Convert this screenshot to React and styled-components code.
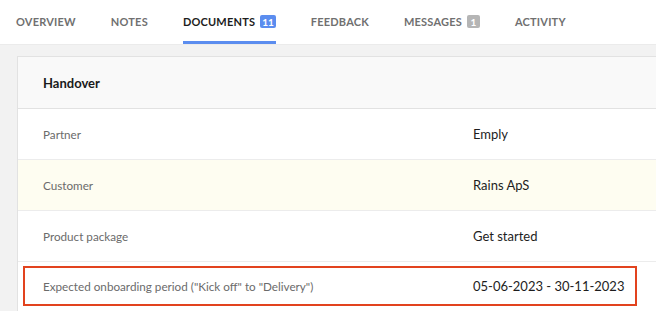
import React from 'react';
import styled, { createGlobalStyle } from 'styled-components';

const GlobalStyle = createGlobalStyle`
  body {
    margin: 0;
    background: #f2f2f2;
    font-family: Lato, "Open Sans", sans-serif;
    overflow: hidden;
  }
`;

const TabBar = styled.nav`
  display: flex;
  gap: 35px;
  height: 45px;
  padding-left: 16px;
  background: #fff;
  border-bottom: 1px solid #ebebeb;
  box-sizing: border-box;
`;

const Tab = styled.div`
  display: flex;
  align-items: center;
  gap: 5px;
  height: 100%;
  box-sizing: border-box;
  padding-top: 2px;
  font-size: 11px;
  font-weight: 700;
  letter-spacing: 0.2px;
  color: ${(p) => (p.active ? '#1d1d1d' : '#707070')};
  border-bottom: 3px solid ${(p) => (p.active ? '#5b8def' : 'transparent')};
  margin-bottom: -1px;
`;

const Badge = styled.span`
  display: inline-flex;
  align-items: center;
  justify-content: center;
  min-width: 13px;
  height: 13px;
  padding: 0 2px;
  box-sizing: border-box;
  border-radius: 2px;
  font-size: 10px;
  font-weight: 700;
  letter-spacing: 0;
  color: #fff;
  background: ${(p) => (p.muted ? '#b5b5b5' : '#5b8def')};
`;

const Content = styled.main`
  padding: 11px 0 0 17px;
`;

const Card = styled.section`
  background: #fff;
  border: 1px solid #e2e2e2;
  border-right: none;
`;

const CardHeader = styled.header`
  display: flex;
  align-items: center;
  height: 51px;
  padding-left: 25px;
  background: #f9f9f9;
  border-bottom: 1px solid #e2e2e2;
  font-size: 13px;
  font-weight: 700;
  color: #1a1a1a;
`;

const Row = styled.div`
  height: 51px;
  box-sizing: border-box;
  border-bottom: 1px solid #ececec;
  background: ${(p) => (p.tinted ? '#fefdf1' : '#fff')};
`;

const RowInner = styled.div`
  display: grid;
  grid-template-columns: 430px 1fr;
  align-items: center;
  height: 100%;
  padding-left: 25px;
  box-sizing: border-box;
`;

const Highlight = styled.div`
  display: grid;
  grid-template-columns: 430px 1fr;
  align-items: center;
  width: 614px;
  height: 40px;
  margin: 4px 0 0 5px;
  padding-left: 18px;
  box-sizing: border-box;
  border: 2px solid #e2431e;
`;

const Label = styled.span`
  font-size: 11.7px;
  color: #6b6b6b;
`;

const Value = styled.span`
  font-size: 13px;
  color: #1d1d1d;
`;

const tabs = [
  { name: 'OVERVIEW' },
  { name: 'NOTES' },
  { name: 'DOCUMENTS', badge: '11', active: true },
  { name: 'FEEDBACK' },
  { name: 'MESSAGES', badge: '1', muted: true },
  { name: 'ACTIVITY' },
];

const rows = [
  { label: 'Partner', value: 'Emply' },
  { label: 'Customer', value: 'Rains ApS', tinted: true },
  { label: 'Product package', value: 'Get started' },
];

const App = () => {
  return (
    <>
      <GlobalStyle />
      <TabBar>
        {tabs.map((t) => (
          <Tab key={t.name} active={t.active}>
            {t.name}
            {t.badge && <Badge muted={t.muted}>{t.badge}</Badge>}
          </Tab>
        ))}
      </TabBar>
      <Content>
        <Card>
          <CardHeader>Handover</CardHeader>
          {rows.map((r) => (
            <Row key={r.label} tinted={r.tinted}>
              <RowInner>
                <Label>{r.label}</Label>
                <Value>{r.value}</Value>
              </RowInner>
            </Row>
          ))}
          <Row>
            <Highlight>
              <Label>Expected onboarding period ("Kick off" to "Delivery")</Label>
              <Value>05-06-2023 - 30-11-2023</Value>
            </Highlight>
          </Row>
        </Card>
      </Content>
    </>
  );
};

export default App;
